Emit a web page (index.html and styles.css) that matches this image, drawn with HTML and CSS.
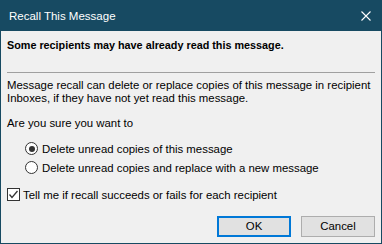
FILE: index.html
```html
<!DOCTYPE html>
<html>
<head>
<meta charset="utf-8">
<link rel="stylesheet" href="styles.css">
</head>
<body>
<div class="window">
  <div class="titlebar">
    <span class="title">Recall This Message</span>
    <svg class="close" width="10" height="10" viewBox="0 0 10 10"><path d="M0.5 0.5 L9.5 9.5 M9.5 0.5 L0.5 9.5" stroke="#ffffff" stroke-width="1.1" fill="none"/></svg>
  </div>
  <div class="content">
    <p class="warning">Some recipients may have already read this message.</p>
    <div class="separator"></div>
    <p class="para">Message recall can delete or replace copies of this message in recipient Inboxes, if they have not yet read this message.</p>
    <p class="question">Are you sure you want to</p>
    <div class="options">
      <div class="row"><span class="radio checked"></span><span>Delete unread copies of this message</span></div>
      <div class="row"><span class="radio"></span><span>Delete unread copies and replace with a new message</span></div>
    </div>
    <div class="row check-row">
      <span class="checkbox"><svg width="11" height="11" viewBox="0 0 11 11"><path d="M1.5 5.5 L4 8.5 L9.5 2" stroke="#333" stroke-width="1.3" fill="none"/></svg></span>
      <span>Tell me if recall succeeds or fails for each recipient</span>
    </div>
    <div class="buttons">
      <button class="btn default">OK</button>
      <button class="btn">Cancel</button>
    </div>
  </div>
</div>
</body>
</html>
```
FILE: styles.css
```css
html, body {
  margin: 0;
  padding: 0;
}
body {
  font-family: "Liberation Sans", Arial, sans-serif;
  font-size: 11.4px;
  color: #000;
  background: #f0f0f0;
}
.window {
  width: 382px;
  height: 244px;
  box-sizing: border-box;
  border: 1px solid #174a62;
  border-top: none;
  background: #f0f0f0;
  display: flex;
  flex-direction: column;
}
.titlebar {
  height: 31px;
  background: #174a62;
  margin: 0 -1px;
  display: flex;
  align-items: center;
  justify-content: space-between;
  padding: 0 11px 0 9px;
  color: #fff;
  font-size: 11.5px;
}
.title {
  line-height: 15px;
  margin-top: 1px;
}
.close {
  display: block;
}
.content {
  padding: 0 6px;
  display: flex;
  flex-direction: column;
}
p {
  margin: 0;
}
.warning {
  font-weight: bold;
  font-size: 10.8px;
  line-height: 15px;
  margin-top: 7px;
}
.separator {
  height: 1px;
  background: #a0a0a0;
  margin-top: 19px;
}
.para {
  line-height: 13px;
  margin-top: 6px;
}
.question {
  line-height: 13px;
  margin-top: 12px;
}
.options {
  margin-top: 9px;
  padding-left: 18px;
  display: flex;
  flex-direction: column;
}
.row {
  display: flex;
  align-items: center;
  height: 19px;
}
.radio {
  width: 11px;
  height: 11px;
  border: 1px solid #333;
  border-radius: 50%;
  background: #fff;
  margin-right: 4px;
  position: relative;
  flex: none;
}
.radio.checked::after {
  content: "";
  position: absolute;
  left: 2.5px;
  top: 2.5px;
  width: 6px;
  height: 6px;
  border-radius: 50%;
  background: #333;
}
.check-row {
  margin-top: 8px;
}
.checkbox {
  width: 11px;
  height: 11px;
  border: 1px solid #333;
  background: #fff;
  margin-right: 3px;
  display: flex;
  align-items: center;
  justify-content: center;
  flex: none;
}
.buttons {
  display: flex;
  justify-content: flex-end;
  gap: 10px;
  margin-top: 12px;
}
.btn {
  width: 74px;
  height: 21px;
  box-sizing: border-box;
  background: #e1e1e1;
  border: 1px solid #adadad;
  font-family: "Liberation Sans", Arial, sans-serif;
  font-size: 11.4px;
  color: #000;
  padding: 0;
  margin: 0;
  line-height: 15px;
}
.btn.default {
  border: 2px solid #0078d7;
}
```
